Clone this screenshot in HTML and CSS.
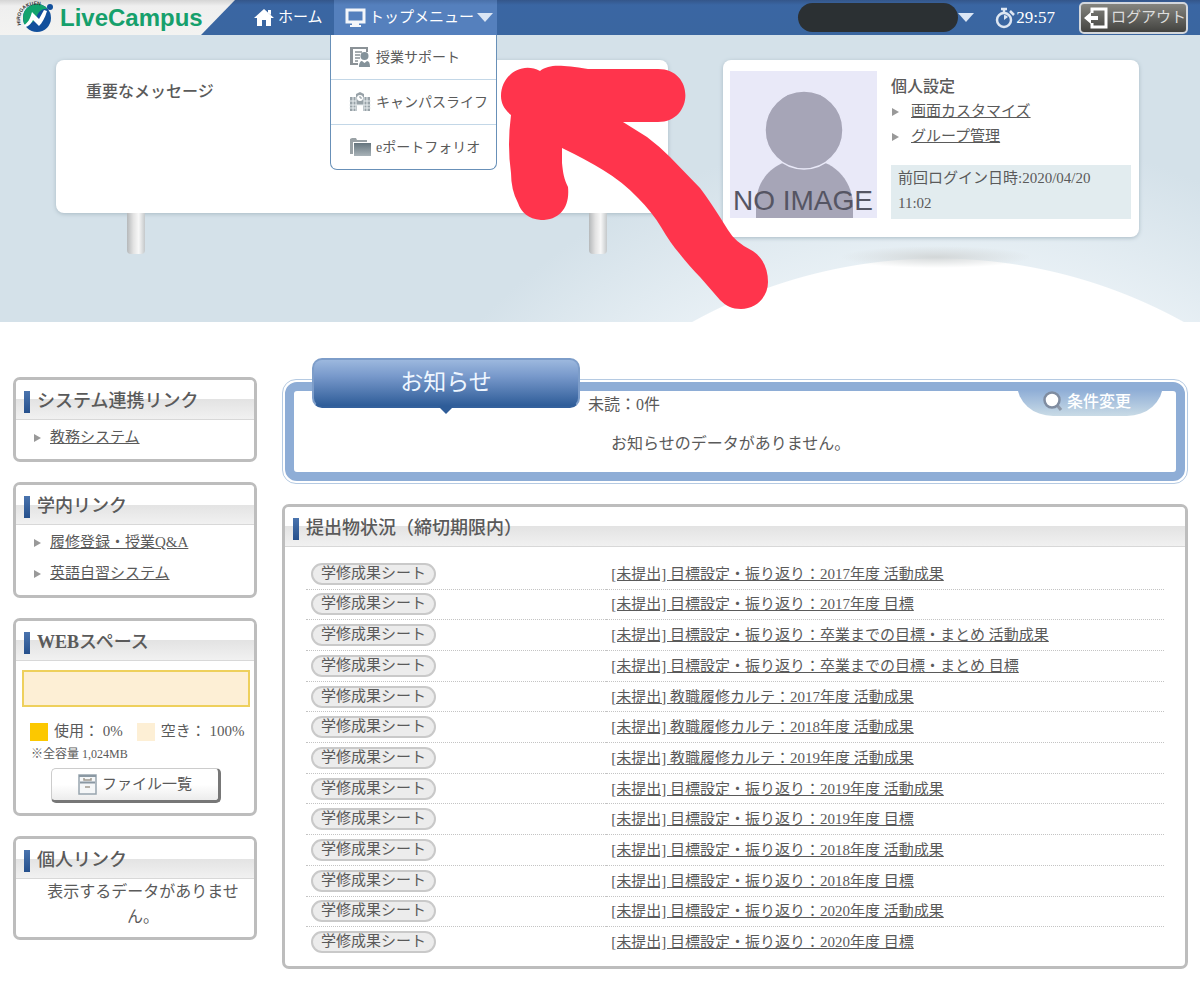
FILE: index.html
```html
<!DOCTYPE html>
<html lang="ja">
<head>
<meta charset="utf-8">
<meta name="viewport" content="width=device-width, initial-scale=1">
<title>LiveCampus</title>
<link rel="stylesheet" href="styles.css">
</head>
<body>
<header class="topbar">
  <a class="brand" href="#">
    <svg class="brand-mark" viewBox="0 0 42 35" aria-hidden="true">
      <defs><path id="ring" d="M8 25C5 17 9 6 21 5C27 5 30 5 34 8"/></defs>
      <circle cx="24" cy="18" r="14" fill="#12509c"/>
      <path d="M10 18A14 14 0 0 1 32 6.500L35 9C28 8 25 13 23 18C21 22 16 25 11 24Z" fill="#12a36e"/>
      <path d="M11 25C15 23 17 19 19 12L26 19L31 10L34 11C32 18 29 23 26 26L20 20C18 24 15 27 12 27Z" fill="#fff"/>
      <circle cx="37" cy="7" r="3" fill="#12509c"/>
      <text class="ring-text"><textPath href="#ring">HIROGAKUEN</textPath></text>
    </svg>
    <span class="brand-name">LiveCampus</span>
  </a>
  <nav class="nav">
    <a class="nav-home" href="#">
      <svg width="20" height="19" viewBox="0 0 20 19" aria-hidden="true"><path d="M10 1L20 10H17V18H12V12H8V18H3V10H0Z" fill="#fff"/><path d="M14 2H17V7L14 5Z" fill="#fff"/></svg>
      <span>ホーム</span>
    </a>
    <div class="nav-menu">
      <button class="nav-button" type="button" aria-expanded="true">
        <svg width="21" height="19" viewBox="0 0 21 19" aria-hidden="true"><path d="M2 2H19V14H2Z" fill="none" stroke="#f4f6fa" stroke-width="3"/><path d="M7 15H14V17H16V19H5V17H7Z" fill="#f4f6fa"/></svg>
        <span>トップメニュー</span>
        <i class="caret"></i>
      </button>
      <ul class="dropdown">
        <li><a href="#">
          <svg width="22" height="22" viewBox="0 0 22 22" aria-hidden="true"><path d="M1 1H19V6H17V3H4V17H9V19H1Z" fill="#8b9297"/><path d="M6 6H13M6 9H11M6 12H11M6 15H9" stroke="#8b9297" stroke-width="1.500"/><circle cx="15.500" cy="10" r="4" fill="#84929a"/><path d="M10 21C10 16 12 15 13 15L15.500 17L18 15C20 15 21 17 21 21Z" fill="#84929a"/></svg>
          <span>授業サポート</span></a></li>
        <li><a href="#">
          <svg width="22" height="22" viewBox="0 0 22 22" aria-hidden="true"><path d="M1 6H7V3L11 1L15 3V6H21V20H14V14H8V20H1Z" fill="#98a2a8"/><path d="M0 10H7M15 10H22M0 14H22M0 17H7M15 17H22M4 6V20M18 6V20M7 6V20M15 6V20" stroke="#e9eef0"/><circle cx="11" cy="7" r="3" fill="#fff"/><path d="M11 5V7H13" fill="none" stroke="#88949b"/></svg>
          <span>キャンパスライフ</span></a></li>
        <li><a href="#">
          <svg width="22" height="22" viewBox="0 0 22 22" aria-hidden="true"><defs><linearGradient id="fold" x2="0" y2="1"><stop offset="0" stop-color="#65757e"/><stop offset="1" stop-color="#a9b3b8"/></linearGradient></defs><path d="M1 18V3L3 2H7L8 4H18V6H4V18Z" fill="#9aa2a6"/><path d="M5 7H22V20H5Z" fill="url(#fold)"/></svg>
          <span>eポートフォリオ</span></a></li>
      </ul>
    </div>
  </nav>
  <div class="session">
    <button class="account" type="button" aria-label="アカウント"><span class="account-name"></span><i class="caret"></i></button>
    <div class="timer">
      <svg width="20" height="22" viewBox="0 0 20 22" aria-hidden="true"><circle cx="9" cy="13" r="7" fill="none" stroke="#dde6f2" stroke-width="2.500"/><path d="M6 2H12M9 2V6M15 4L19 8" stroke="#dde6f2" stroke-width="2.500"/><path d="M9 13V8A5 5 0 0 1 13 10Z" fill="#dde6f2"/></svg>
      <span>29:57</span>
    </div>
    <button class="logout" type="button">
      <svg width="24" height="22" viewBox="0 0 24 22" aria-hidden="true"><path d="M8 6V2H22V20H8V16" fill="none" stroke="#fff" stroke-width="3"/><path d="M0 11L7 5V9H14V13H7V17Z" fill="#fff"/></svg>
      <span>ログアウト</span>
    </button>
  </div>
</header>

<section class="hero">
  <div class="board">
    <h2 class="board-title">重要なメッセージ</h2>
    <i class="leg leg-left"></i><i class="leg leg-right"></i>
  </div>
  <div class="profile">
    <svg class="photo" viewBox="0 0 147 147" role="img" aria-label="NO IMAGE">
      <rect width="147" height="147" fill="#e9e9f8"/>
      <path d="M26 147V132C27 108 44 88 74 88S121 108 123 132V147Z" fill="#a6a5b7"/>
      <circle cx="74" cy="59" r="39" fill="#a6a5b7" stroke="#e9e9f8" stroke-width="1.500"/>
      <text class="photo-text" x="73" y="139" text-anchor="middle">NO IMAGE</text>
    </svg>
    <div class="profile-info">
      <h2 class="profile-title">個人設定</h2>
      <ul class="profile-links">
        <li><a href="#">画面カスタマイズ</a></li>
        <li><a href="#">グループ管理</a></li>
      </ul>
      <p class="last-login">前回ログイン日時:2020/04/20 11:02</p>
    </div>
  </div>
</section>

<div class="page">
  <aside class="side">
    <section class="card">
      <h2 class="card-title">システム連携リンク</h2>
      <ul class="links"><li><a href="#">教務システム</a></li></ul>
    </section>
    <section class="card">
      <h2 class="card-title">学内リンク</h2>
      <ul class="links"><li><a href="#">履修登録・授業Q&amp;A</a></li><li><a href="#">英語自習システム</a></li></ul>
    </section>
    <section class="card">
      <h2 class="card-title"><span><b>WEB</b>スペース</span></h2>
      <div class="space">
        <div class="space-bar"></div>
        <div class="legend">
          <i class="swatch used"></i><span>使用： 0%</span>
          <i class="swatch free"></i><span>空き： 100%</span>
        </div>
        <p class="capacity">※全容量 1,024MB</p>
        <button class="file-button" type="button">
          <svg width="19" height="21" viewBox="0 0 19 21" aria-hidden="true"><path d="M1 1H18V20H1Z" fill="#f5f7f8" stroke="#98a5ae" stroke-width="1.500"/><path d="M1 2H18M2 8.500H17" stroke="#8a98a3" stroke-width="2"/><path d="M6 4V6H13V4M7 13H12" fill="none" stroke="#a09a90" stroke-width="1.500"/></svg>
          <span>ファイル一覧</span>
        </button>
      </div>
    </section>
    <section class="card">
      <h2 class="card-title">個人リンク</h2>
      <p class="empty">表示するデータがありません。</p>
    </section>
  </aside>

  <main class="main">
    <section class="news">
      <div class="news-frame">
        <p class="unread">未読：0件</p>
        <p class="news-empty">お知らせのデータがありません。</p>
      </div>
      <h2 class="news-tab">お知らせ</h2>
      <button class="filter" type="button">
        <svg width="20" height="20" viewBox="0 0 20 20" aria-hidden="true"><path d="M14 14L18 19" stroke="#8d98a8" stroke-width="3"/><circle cx="9" cy="9" r="7.500" fill="#fff" stroke="#7f8ca0" stroke-width="2.500"/></svg>
        <span>条件変更</span>
      </button>
    </section>
    <section class="card">
      <h2 class="card-title">提出物状況（締切期限内）</h2>
      <div class="tasks-wrap">
        <table class="tasks">
          <tbody>
            <tr><td><span class="tag">学修成果シート</span></td><td><a href="#">[未提出] 目標設定・振り返り：2017年度 活動成果</a></td></tr>
            <tr><td><span class="tag">学修成果シート</span></td><td><a href="#">[未提出] 目標設定・振り返り：2017年度 目標</a></td></tr>
            <tr><td><span class="tag">学修成果シート</span></td><td><a href="#">[未提出] 目標設定・振り返り：卒業までの目標・まとめ 活動成果</a></td></tr>
            <tr><td><span class="tag">学修成果シート</span></td><td><a href="#">[未提出] 目標設定・振り返り：卒業までの目標・まとめ 目標</a></td></tr>
            <tr><td><span class="tag">学修成果シート</span></td><td><a href="#">[未提出] 教職履修カルテ：2017年度 活動成果</a></td></tr>
            <tr><td><span class="tag">学修成果シート</span></td><td><a href="#">[未提出] 教職履修カルテ：2018年度 活動成果</a></td></tr>
            <tr><td><span class="tag">学修成果シート</span></td><td><a href="#">[未提出] 教職履修カルテ：2019年度 活動成果</a></td></tr>
            <tr><td><span class="tag">学修成果シート</span></td><td><a href="#">[未提出] 目標設定・振り返り：2019年度 活動成果</a></td></tr>
            <tr><td><span class="tag">学修成果シート</span></td><td><a href="#">[未提出] 目標設定・振り返り：2019年度 目標</a></td></tr>
            <tr><td><span class="tag">学修成果シート</span></td><td><a href="#">[未提出] 目標設定・振り返り：2018年度 活動成果</a></td></tr>
            <tr><td><span class="tag">学修成果シート</span></td><td><a href="#">[未提出] 目標設定・振り返り：2018年度 目標</a></td></tr>
            <tr><td><span class="tag">学修成果シート</span></td><td><a href="#">[未提出] 目標設定・振り返り：2020年度 活動成果</a></td></tr>
            <tr><td><span class="tag">学修成果シート</span></td><td><a href="#">[未提出] 目標設定・振り返り：2020年度 目標</a></td></tr>
          </tbody>
        </table>
      </div>
    </section>
  </main>
</div>

<svg class="arrow" width="270" height="246" viewBox="500 64 270 246" aria-hidden="true">
  <path d="M540 71C550 64 560 65 588 69L658 69C695 69 694 122 658 122H623L647 137Q659 146 670 157L700 188Q710 201 728 230Q735 242 751 250C762 256 768 268 768 282C768 297 756 309 741 309C732 309 726 306 720 300L700 277Q690 267 679 253Q671 244 661 227Q652 212 638 198Q623 182 603 170Q585 159 562 148V163C563 173 564 179 568 187C570 207 560 220 541 220C528 219 521 212 518 203Q511 190 511 173Q507 145 511 115C504 109 501 103 501 96C501 75 522 61 540 71Z" fill="#ff344c"/>
</svg>
</body>
</html>
```
FILE: styles.css
```css
* { box-sizing: border-box; }
body {
  margin: 0;
  position: relative;
  background: #fff;
  color: #5a5a5a;
  font-family: "Liberation Serif", "Noto Sans CJK JP", sans-serif;
  font-size: 15px;
  line-height: 25px;
}
h2, p, ul { margin: 0; padding: 0; }
ul { list-style: none; }
a { color: inherit; }
svg { flex: none; display: block; }
button {
  font: inherit;
  color: inherit;
  border: 0;
  padding: 0;
  background: none;
  white-space: nowrap;
}

/* top bar */
.topbar {
  display: flex;
  align-items: stretch;
  height: 35px;
  padding-right: 12px;
  background: linear-gradient(#34568a, #3a66a3 5px, #3a66a0);
  color: #fff;
  position: relative;
  z-index: 2;
}
.brand {
  display: flex;
  align-items: center;
  width: 235px;
  padding-left: 13px;
  background: linear-gradient(#d5d5d5, #efefef 6px, #f3f3f1);
  clip-path: polygon(0 0, 100% 0, 201px 100%, 0 100%);
  text-decoration: none;
}
.brand-mark { width: 42px; height: 35px; }
.ring-text { font: bold 5px "Liberation Sans", sans-serif; fill: #333; }
.brand-name {
  margin-left: 5px;
  color: #16a06c;
  font: bold 24px/33px "Liberation Sans", sans-serif;
}
.nav { display: flex; margin-left: 19px; line-height: 33px; }
.nav-home {
  display: flex;
  align-items: center;
  gap: 4px;
  width: 80px;
  color: #fff;
  text-decoration: none;
}
.nav-menu { position: relative; display: flex; }
.nav-button {
  display: flex;
  align-items: center;
  gap: 3px;
  width: 163px;
  padding-left: 11px;
  background: linear-gradient(#4a70a8, #5580bd 5px);
  color: #fff;
}
.caret {
  border: 8px solid transparent;
  border-top: 9px solid #dbe6f5;
  border-bottom: 0;
}
.dropdown {
  position: absolute;
  top: 35px;
  right: 0;
  width: 167px;
  background: #fff;
  border: 1px solid #6890b8;
  border-top: 0;
  border-radius: 0 0 7px 7px;
  color: #5a5a5a;
  font-size: 14px;
}
.dropdown li + li { border-top: 1px solid #c3d7e7; }
.dropdown a {
  display: flex;
  align-items: center;
  gap: 5px;
  height: 44px;
  padding-left: 18px;
  text-decoration: none;
  white-space: nowrap;
}
.session { display: flex; align-items: center; margin-left: auto; }
.account { display: flex; align-items: center; }
.account-name {
  width: 160px;
  height: 29px;
  border-radius: 15px;
  background: #2b3033;
}
.timer {
  display: flex;
  align-items: center;
  gap: 1px;
  margin: 0 24px 0 21px;
  font-size: 17px;
}
.logout {
  display: flex;
  align-items: center;
  gap: 3px;
  width: 109px;
  height: 32px;
  padding-left: 3px;
  overflow: hidden;
  border: 2px solid #d3d7dc;
  border-radius: 5px;
  background: linear-gradient(#85857f, #42423f);
  color: #ddd;
}

/* hero */
.hero {
  display: flex;
  align-items: flex-start;
  justify-content: space-between;
  height: 287px;
  padding: 25px 61px 0 56px;
  background:
    radial-gradient(ellipse 95px 11px at calc(100% - 264px) 222px, #d3d7d8, #d3d7d800),
    radial-gradient(circle 508px at calc(100% - 262px) 731px, #fff 507px, #fff0 508px),
    radial-gradient(circle 640px at calc(100% - 262px) 731px, #e8f0f5 500px, #d4e1e9 640px);
}
.board {
  position: relative;
  flex: 0 1 612px;
  height: 153px;
  padding: 19px 30px;
  border-radius: 8px;
  background: #fff;
  box-shadow: 0 1px 4px #a9bac4;
}
.board-title, .profile-title { font-size: 16px; font-weight: 500; line-height: 25px; }
.leg {
  position: absolute;
  top: 100%;
  width: 18px;
  height: 41px;
  border-radius: 0 0 4px 4px;
  background: linear-gradient(90deg, #b5b8ba, #e2e2e2 35%, #f8f8f8 65%, #c4c8ca);
}
.leg-left { left: 71px; }
.leg-right { right: 61px; }
.profile {
  display: flex;
  gap: 14px;
  width: 416px;
  padding: 11px 8px 18px 7px;
  border-radius: 8px;
  background: #fff;
  box-shadow: 0 1px 4px #a9bac4;
}
.photo { width: 147px; height: 147px; }
.photo-text { font: 28px "Liberation Sans", sans-serif; fill: #555563; }
.profile-info { flex: 1; padding-top: 3px; }
.profile-links li { position: relative; padding-left: 20px; }
.profile-links li::before, .links li::before {
  content: "";
  position: absolute;
  left: 1px;
  top: calc(50% - 4px);
  border: 4px solid transparent;
  border-left: 7px solid #999;
  border-right: 0;
}
.last-login { margin-top: 16px; padding: 1px 7px 3px; background: #e2ecef; }

/* page body */
.page {
  display: flex;
  align-items: flex-start;
  gap: 25px;
  padding: 55px 12px 15px 13px;
}
.side { display: grid; gap: 20px; width: 244px; flex: none; }
.card {
  border: 3px solid #bdbdbd;
  border-radius: 7px;
  background: #fff;
}
.card-title {
  display: flex;
  align-items: center;
  gap: 7px;
  height: 40px;
  padding: 4px 0 0 8px;
  border-bottom: 1px solid #d8d8d8;
  border-radius: 4px 4px 0 0;
  background: linear-gradient(#fff 50%, #e3e3e3 50%, #f1f1f1);
  font-size: 18px;
  font-weight: 500;
}
.card-title::before {
  content: "";
  width: 6px;
  height: 22px;
  background: linear-gradient(#4a74ae, #26508c);
}
.links { padding: 2px 0 6px 17px; line-height: 31px; }
.links li { position: relative; padding-left: 17px; }
.space { padding: 9px 4px 10px 6px; }
.space-bar { height: 37px; border: 2px solid #eed05c; background: #fdefd5; }
.legend {
  display: flex;
  align-items: center;
  gap: 6px;
  margin-top: 12px;
  padding-left: 8px;
  white-space: nowrap;
}
.legend .free { margin-left: 8px; }
.swatch { width: 18px; height: 18px; }
.used { background: #fcc800; }
.free { background: #fdefd5; }
.capacity { padding-left: 9px; font-size: 12px; line-height: 20px; }
.file-button {
  display: flex;
  align-items: center;
  justify-content: center;
  gap: 5px;
  width: 170px;
  height: 35px;
  margin: 4px auto 0;
  border: 1px solid #ccc;
  border-right: 3px solid #777;
  border-bottom: 3px solid #777;
  border-radius: 5px;
  background: linear-gradient(#fff 50%, #ececec);
}
.empty { padding: 0 12px 8px 28px; font-size: 16px; text-align: center; }

/* news */
.main { flex: 1; min-width: 0; display: grid; gap: 20px; padding-top: 2px; }
.news { position: relative; font-size: 16px; }
.news-frame {
  position: relative;
  height: 105px;
  padding: 12px 0 0 305px;
  border: 1px solid #b5cae2;
  border-radius: 14px;
  background: #fff;
}
.news-frame::before {
  content: "";
  position: absolute;
  inset: 2px;
  border: 9px solid #8eadd6;
  border-radius: 12px;
}
.news-empty { margin-top: 14px; padding-left: 23px; }
.news-tab {
  position: absolute;
  left: 30px;
  top: -21px;
  width: 268px;
  height: 50px;
  border: 2px solid #7d9dc9;
  border-bottom-color: #33609c;
  border-radius: 10px;
  background: linear-gradient(#9cb8de, #7899cb 35%, #2e5c98);
  color: #eef6ff;
  font-size: 23px;
  font-weight: 400;
  line-height: 45px;
  text-align: center;
}
.news-tab::after {
  content: "";
  position: absolute;
  left: calc(50% - 8px);
  top: 100%;
  border: 8px solid transparent;
  border-top-color: #2e5c98;
  border-bottom: 0;
}
.filter {
  position: absolute;
  right: 25px;
  top: 4px;
  display: flex;
  align-items: center;
  justify-content: center;
  gap: 4px;
  width: 146px;
  height: 33px;
  padding: 3px 6px 0 0;
  border-radius: 0 0 36px 36px / 0 0 32px 32px;
  background: linear-gradient(#8eadd6 20%, #c9dbe6);
  color: #fff;
  font-weight: 500;
}

/* submissions */
.tasks-wrap { padding: 12px 21px 9px; }
.tasks {
  width: 100%;
  height: 398px;
  border-collapse: collapse;
  table-layout: fixed;
}
.tasks td { padding: 0; line-height: 20px; border-bottom: 1px dotted #c4c4c4; }
.tasks td:first-child { width: 35%; padding-left: 5px; }
.tasks td:last-child { padding-left: 5px; }
.tasks tr:last-child td { border-bottom: 0; }
.tag {
  display: block;
  width: 125px;
  height: 22px;
  border: 2px solid #c9c9c9;
  border-radius: 11px;
  background: #ececec;
  line-height: 17px;
  text-align: center;
}

/* pointer drawn over the menu */
.arrow { position: absolute; left: 500px; top: 64px; z-index: 3; }
```
